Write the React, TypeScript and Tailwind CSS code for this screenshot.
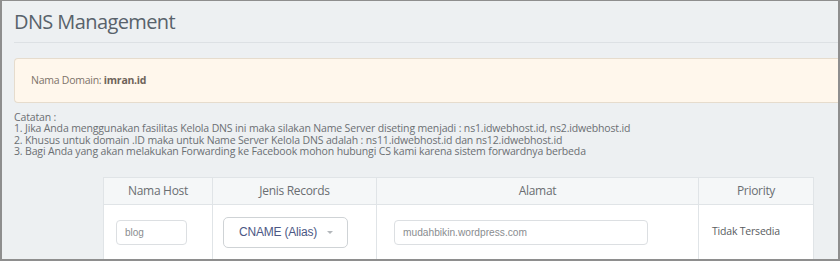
export default function App() {
  const notes = [
    "1. Jika Anda menggunakan fasilitas Kelola DNS ini maka silakan Name Server diseting menjadi : ns1.idwebhost.id, ns2.idwebhost.id",
    "2. Khusus untuk domain .ID maka untuk Name Server Kelola DNS adalah : ns11.idwebhost.id dan ns12.idwebhost.id",
    "3. Bagi Anda yang akan melakukan Forwarding ke Facebook mohon hubungi CS kami karena sistem forwardnya berbeda",
  ];

  return (
    <div className="w-[840px] h-[261px] overflow-hidden border-t border-l-2 border-r-2 border-b-2 border-[#8e8e8e] bg-[#edf0f2] font-['Open_Sans',sans-serif]">
      <div className="pl-[12px] pt-[10px]">
        <h1 className="text-[20px] leading-[22px] tracking-[-0.6px] text-[#58626b]">DNS Management</h1>
        <div className="mt-[9px] h-px bg-[#dde1e4]" />

        {/* domain info */}
        <div className="mt-[15px] flex h-[45px] items-center rounded-l-[4px] border border-r-0 border-[#e6dccd] bg-[#fff7ec] pl-[16px] text-[10.5px] tracking-[-0.25px] text-[#7d736a]">
          Nama Domain:&nbsp;<b className="font-bold text-[#6e6359]">imran.id</b>
        </div>

        <div className="mt-[9px] text-[10.5px] leading-[11.4px] tracking-[-0.15px] text-[#6b6f73]">
          <div>Catatan :</div>
          {notes.map((n) => (
            <div key={n}>{n}</div>
          ))}
        </div>

        {/* records table */}
        <div className="ml-[89px] mt-[19px] w-[711px] border-l border-t border-[#e0e4e7]">
          <div className="grid grid-cols-[109px_164px_322px_115px] bg-[#f5f7f8] text-[12px] tracking-[-0.3px] text-[#6a6e72]">
            <div className="flex h-[26px] items-center justify-center border-r border-[#e0e4e7]">Nama Host</div>
            <div className="flex h-[26px] items-center justify-center border-r border-[#e0e4e7]">Jenis Records</div>
            <div className="flex h-[26px] items-center justify-center border-r border-[#e0e4e7]">Alamat</div>
            <div className="flex h-[26px] items-center justify-center border-r border-[#e0e4e7]">Priority</div>
          </div>
          <div className="grid grid-cols-[109px_164px_322px_115px] border-t border-[#e0e4e7] bg-white">
            <div className="flex h-[55px] items-center border-r border-[#e0e4e7] pl-[12px]">
              <input
                readOnly
                value="blog"
                className="h-[25px] w-[71px] rounded-[4px] border border-[#dcdfe2] px-[8px] font-['Liberation_Sans',sans-serif] text-[10px] text-[#8a8d90] outline-none"
              />
            </div>
            <div className="flex h-[55px] items-center border-r border-[#e0e4e7] pl-[10px]">
              <div className="flex h-[31px] w-[125px] items-center rounded-[5px] border border-[#cfd3d6] bg-white pl-[15px] font-['Liberation_Sans',sans-serif] text-[12px] tracking-[-0.2px] text-[#4c5885]">
                CNAME (Alias)
                <svg width="6" height="3" viewBox="0 0 6 3" className="ml-[10px]">
                  <path d="M0 0h6L3 3z" fill="#b3b7bb" />
                </svg>
              </div>
            </div>
            <div className="flex h-[55px] items-center border-r border-[#e0e4e7] pl-[17px]">
              <input
                readOnly
                value="mudahbikin.wordpress.com"
                className="h-[25px] w-[254px] rounded-[4px] border border-[#dcdfe2] px-[8px] font-['Liberation_Sans',sans-serif] text-[10.2px] text-[#8a8d90] outline-none"
              />
            </div>
            <div className="flex h-[55px] items-center border-r border-[#e0e4e7] pl-[13px] text-[10.5px] tracking-[-0.2px] text-[#595d61]">
              Tidak Tersedia
            </div>
          </div>
        </div>
      </div>
    </div>
  );
}
